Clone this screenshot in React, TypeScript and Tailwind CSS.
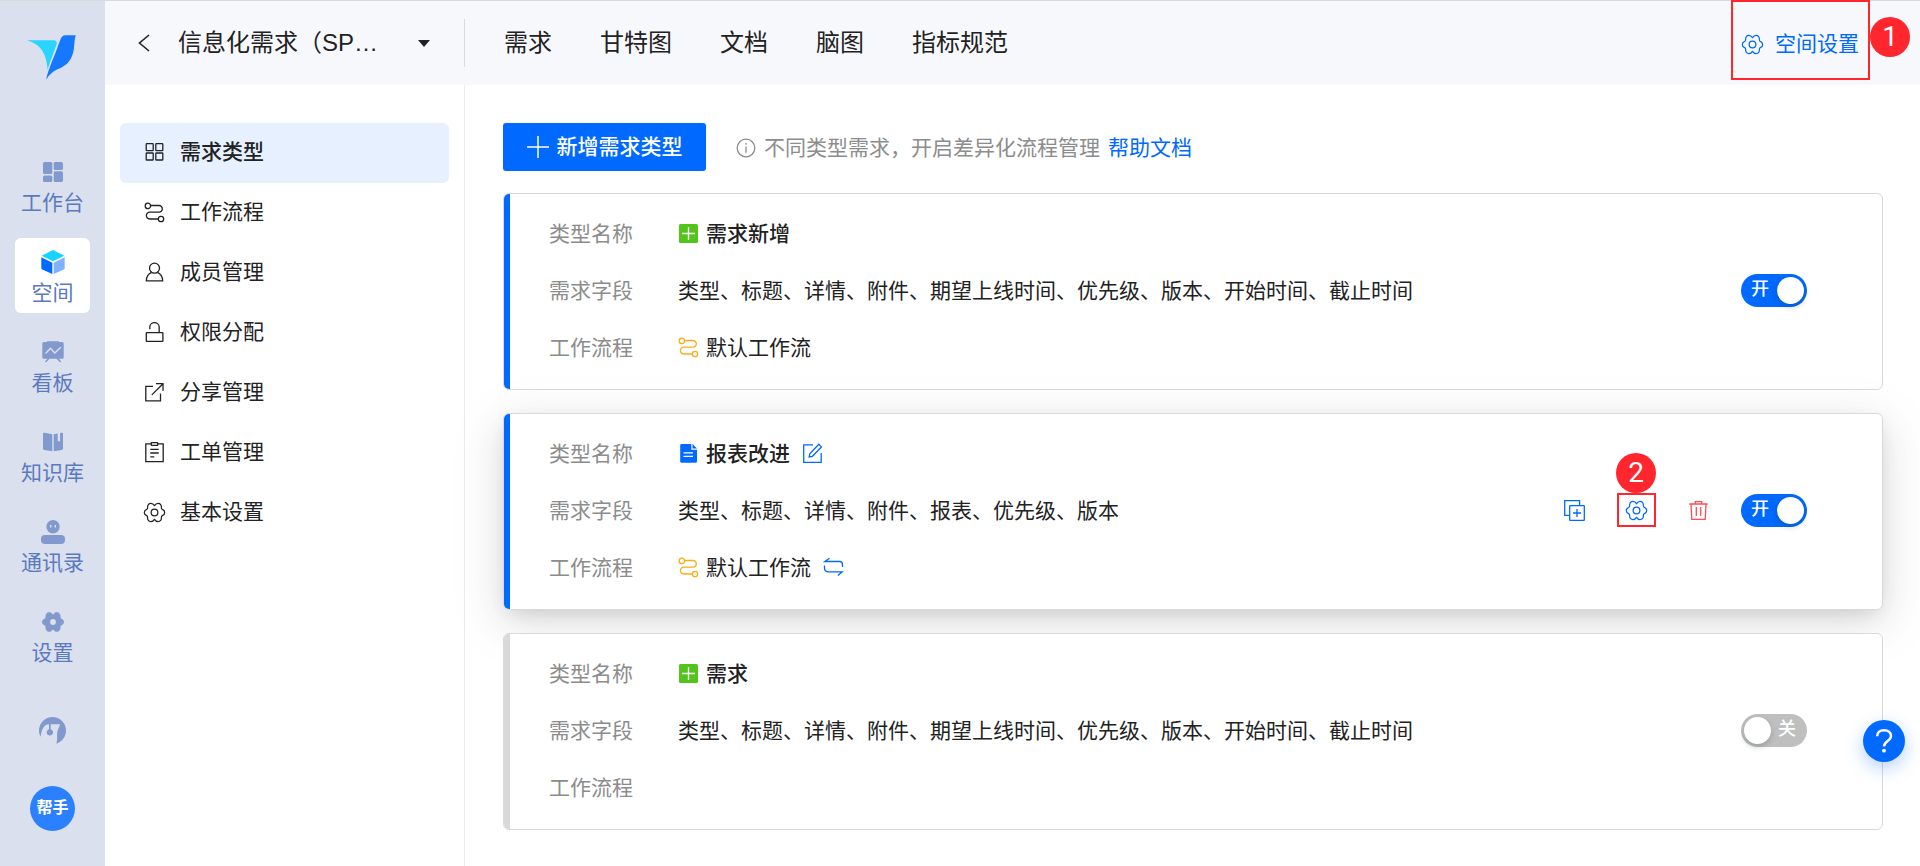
import { ReactNode, useState } from 'react';

type IconProps = { className?: string };

const GEAR_OUTLINE =
  'M12 4.9C11 3.4 9.8 2.4 8.3 2.4C5.9 2.4 4.6 4.2 4.8 7.2C4.8 8.2 4.3 8.6 3.4 9C.7 10.2.7 13.8 3.4 15C4.3 15.4 4.8 15.8 4.8 16.8C4.6 19.8 5.9 21.6 8.3 21.6C9.8 21.6 11 20.6 12 19.1C13 20.6 14.2 21.6 15.7 21.6C18.1 21.6 19.4 19.8 19.2 16.8C19.2 15.8 19.7 15.4 20.6 15C23.3 13.8 23.3 10.2 20.6 9C19.7 8.6 19.2 8.2 19.2 7.2C19.4 4.2 18.1 2.4 15.7 2.4C14.2 2.4 13 3.4 12 4.9Z';

function LineIcon({ className = 'size-[21px]', children }: IconProps & { children: ReactNode }) {
  return (
    <svg
      viewBox="0 0 21 21"
      fill="none"
      stroke="currentColor"
      strokeWidth="1.3"
      className={`shrink-0 ${className}`}
      aria-hidden="true"
    >
      {children}
    </svg>
  );
}

function GridIcon() {
  return (
    <LineIcon>
      <rect x="2.2" y="1.7" width="7" height="7" rx="0.6" />
      <rect x="11.8" y="1.7" width="7" height="7" rx="0.6" />
      <rect x="2.2" y="11" width="7" height="7" rx="0.6" />
      <rect x="11.8" y="11" width="7" height="7" rx="0.6" />
    </LineIcon>
  );
}

function FlowIcon({ className }: IconProps) {
  return (
    <LineIcon className={className}>
      <circle cx="3.9" cy="3.9" r="2.7" />
      <circle cx="17" cy="17" r="2.7" />
      <path d="M6.6 3.5H15a3.3 3.3 0 0 1 3.3 3.4a3.3 3.3 0 0 1-3.3 3.3H5.8a3.3 3.3 0 0 0-3.4 3.4a3.3 3.3 0 0 0 3.4 3.4h8.5" />
    </LineIcon>
  );
}

function UserIcon() {
  return (
    <LineIcon>
      <circle cx="10.5" cy="6.2" r="5" />
      <path d="M7.6 10.4C4.3 11.8 2.4 14.7 2.3 18.9h16.4c-.1-4.2-2-7.1-5.3-8.5" />
    </LineIcon>
  );
}

function LockIcon() {
  return (
    <LineIcon>
      <rect x="2.3" y="10.6" width="16.6" height="8.8" rx="0.5" />
      <path d="M5.8 7.3V5.3a4.7 4.7 0 0 1 9.4 0v5.3" />
    </LineIcon>
  );
}

function ShareIcon() {
  return (
    <LineIcon>
      <path d="M9 4.3H1.8v14.6h14.7v-7.4M12 1.7h7v7M19 1.7L7.8 12.9" />
    </LineIcon>
  );
}

function ClipboardIcon() {
  return (
    <LineIcon>
      <path d="M7.3 1.9H1.8v17.8h17.4V1.9h-5.5" />
      <rect x="7.3" y="0.7" width="6.4" height="2.7" rx="0.4" />
      <path d="M6.3 7.3h8.4M6.3 11h8.4M6.3 14.8h4" />
    </LineIcon>
  );
}

function GearIcon({ className = '' }: IconProps) {
  return (
    <svg
      viewBox="0 0 24 24"
      fill="none"
      stroke="currentColor"
      strokeWidth="1.3"
      strokeLinejoin="round"
      className={`size-[23px] shrink-0 ${className}`}
      aria-hidden="true"
    >
      <path d={GEAR_OUTLINE} />
      <circle cx="12" cy="12" r="3.5" />
    </svg>
  );
}

function EditIcon() {
  return (
    <LineIcon>
      <path d="M11 1.8H1.7v17.5h17.5V10" />
      <path d="M16.8 1.3l2.6 2.6-9 9.4-3.3.7.7-3.3z" />
    </LineIcon>
  );
}

function SwapIcon() {
  return (
    <LineIcon>
      <path d="M6.5 1.3L2 4.5h14.5a3 3 0 0 1 3 3V10M14.8 18.5l4.5-3.7H4.8a3.3 3.3 0 0 1-3.3-3.3v-3" />
    </LineIcon>
  );
}

function CopyIcon() {
  return (
    <LineIcon>
      <path d="M5.7 15.3H.7V.7h14.9v5" />
      <rect x="5.7" y="5.7" width="14.6" height="14.6" rx="0.4" />
      <path d="M13 9v8M9 13h8" />
    </LineIcon>
  );
}

function TrashIcon() {
  return (
    <LineIcon>
      <path d="M1.3 4h18.4M7.3 4V1.7h6.4V4M3 4l.8 15.3h13.4L18 4M8.3 7v9M12.7 7v9" />
    </LineIcon>
  );
}

function PlusBox() {
  return (
    <svg viewBox="0 0 21 21" className="size-[21px] shrink-0" aria-hidden="true">
      <rect x="1" y="1" width="19" height="19" rx="1.5" fill="#52c41a" />
      <path d="M10.5 4v13M4 10.5h13" stroke="#fff" strokeWidth="1.3" />
    </svg>
  );
}

function DocIcon() {
  return (
    <svg viewBox="0 0 21 21" className="size-[21px] shrink-0" aria-hidden="true">
      <path
        d="M3.5 1h9.8v5.7H19v11.8a1.3 1.3 0 0 1-1.3 1.3H3.5a1.3 1.3 0 0 1-1.3-1.3V2.3A1.3 1.3 0 0 1 3.5 1z"
        fill="#0069ff"
      />
      <path d="M14.5 1L19 5.5h-4.5z" fill="#0069ff" />
      <path d="M5.5 9.9H15M5.5 13.3H15" stroke="#fff" strokeWidth="1.3" />
    </svg>
  );
}

function Logo() {
  return (
    <svg viewBox="0 0 51 45" className="h-[45px] w-[51px]" aria-hidden="true">
      <path d="M0 5.3H26C29 5.3 30.3 6.5 29.5 9.5L20.5 34.5C20 22 15.5 9.5 0 5.3Z" fill="#2ad4ff" />
      <path
        d="M38.5.3H48.7C46.5 8 48 14.5 45 21C42 28.5 36.5 32 30 34.5C25.5 36.5 22.5 39.5 19.3 44.5C20 37.5 26.5 24 33 5.5C34.2 2 35.8.3 38.5.3Z"
        fill="#1677ff"
      />
    </svg>
  );
}

function RailSvg({ children }: { children: ReactNode }) {
  return (
    <svg viewBox="0 0 24 24" className="size-[24px]" fill="#8299cd" aria-hidden="true">
      {children}
    </svg>
  );
}

const railItems: { label: string; icon: ReactNode }[] = [
  {
    label: '工作台',
    icon: (
      <RailSvg>
        <rect x="2" y="2" width="9.3" height="12" rx="1.5" />
        <rect x="12.7" y="2" width="9.3" height="8" rx="1.5" />
        <rect x="2" y="15.5" width="9.3" height="6.5" rx="1.5" />
        <rect x="12.7" y="11.3" width="9.3" height="10.7" rx="1.5" />
      </RailSvg>
    ),
  },
  {
    label: '空间',
    icon: (
      <RailSvg>
        <path d="M12 0L23.3 5.7 12 11.3.7 5.7z" fill="#16d3ff" />
        <path d="M.3 7.3L11.3 12.7V24l-10-4.5a1.5 1.5 0 0 1-1-1.4z" fill="#0069ff" />
        <path d="M23.7 7.3L12.7 12.7V24l10-4.5a1.5 1.5 0 0 0 1-1.4z" fill="#80b1ff" />
      </RailSvg>
    ),
  },
  {
    label: '看板',
    icon: (
      <RailSvg>
        <path d="M6 2V1.3h12V2h3.2a1.5 1.5 0 0 1 1.5 1.5v13.7a1.5 1.5 0 0 1-1.5 1.5h-3.4l2.4 2.7-1 1-3.7-3.7h-7L5 22.4l-1-1 2.4-2.7H2.8a1.5 1.5 0 0 1-1.5-1.5V3.5A1.5 1.5 0 0 1 2.8 2z" />
        <path d="M4.5 13.5l5-5.3 4.3 4.8 6-5.7" fill="none" stroke="#dae0ee" strokeWidth="1.4" />
      </RailSvg>
    ),
  },
  {
    label: '知识库',
    icon: (
      <RailSvg>
        <path d="M2 4a1.3 1.3 0 0 1 1.6-1.3l7.7 1.6v17L3.3 20A1.5 1.5 0 0 1 2 18.5z" />
        <path d="M12.7 4.3l4-.8v7.7h2.4V3l1.3-.3A1.3 1.3 0 0 1 22 4v14.5a1.5 1.5 0 0 1-1.3 1.5l-8 1.3z" />
      </RailSvg>
    ),
  },
  {
    label: '通讯录',
    icon: (
      <RailSvg>
        <circle cx="12" cy="6.7" r="6.7" />
        <rect x="0" y="15" width="24" height="9" rx="4" />
        <path d="M9.7 5v2.5M14.3 5v2.5" stroke="#dae0ee" strokeWidth="1.4" />
      </RailSvg>
    ),
  },
  {
    label: '设置',
    icon: (
      <RailSvg>
        <path d={GEAR_OUTLINE} stroke="#8299cd" strokeWidth="0.6" strokeLinejoin="round" />
        <circle cx="12" cy="12" r="2.9" fill="#dae0ee" />
      </RailSvg>
    ),
  },
];

const topTabs = ['需求', '甘特图', '文档', '脑图', '指标规范'];

const menuItems: { label: string; icon: ReactNode }[] = [
  { label: '需求类型', icon: <GridIcon /> },
  { label: '工作流程', icon: <FlowIcon /> },
  { label: '成员管理', icon: <UserIcon /> },
  { label: '权限分配', icon: <LockIcon /> },
  { label: '分享管理', icon: <ShareIcon /> },
  { label: '工单管理', icon: <ClipboardIcon /> },
  { label: '基本设置', icon: <GearIcon className="-mx-px" /> },
];

interface RequirementType {
  name: string;
  icon: 'plus' | 'doc';
  fields: string;
  workflow?: string;
  enabled: boolean;
  hovered?: boolean;
}

const requirementTypes: RequirementType[] = [
  {
    name: '需求新增',
    icon: 'plus',
    fields: '类型、标题、详情、附件、期望上线时间、优先级、版本、开始时间、截止时间',
    workflow: '默认工作流',
    enabled: true,
  },
  {
    name: '报表改进',
    icon: 'doc',
    fields: '类型、标题、详情、附件、报表、优先级、版本',
    workflow: '默认工作流',
    enabled: true,
    hovered: true,
  },
  {
    name: '需求',
    icon: 'plus',
    fields: '类型、标题、详情、附件、期望上线时间、优先级、版本、开始时间、截止时间',
    enabled: false,
  },
];

function StepBadge({ step, className }: { step: number; className: string }) {
  return (
    <span
      className={`absolute flex size-10 items-center justify-center rounded-full bg-[#ff272d] font-[Roboto,sans-serif] text-[28px] leading-none text-white ${className}`}
    >
      {step}
    </span>
  );
}

function Toggle({ on, label, onChange }: { on: boolean; label: string; onChange: () => void }) {
  return (
    <button
      type="button"
      role="switch"
      aria-checked={on}
      aria-label={label}
      onClick={onChange}
      className={`flex h-[33px] w-[66px] items-center justify-between rounded-full text-lg leading-none font-medium text-white ${
        on ? 'bg-[#0069ff] pr-[3px] pl-2.5' : 'flex-row-reverse bg-[#bfbfbf] pr-[11px] pl-[3px]'
      }`}
    >
      <span className="pb-0.5">{on ? '开' : '关'}</span>
      <span className="size-[27px] rounded-full bg-white shadow-[0_3px_6px_rgba(0,35,11,0.2)]" />
    </button>
  );
}

function Row({ label, children }: { label: string; children?: ReactNode }) {
  return (
    <div className="flex h-[57px] items-center">
      <dt className="w-[129px] shrink-0 text-[#8c8c8c]">{label}</dt>
      <dd className="flex items-center">{children}</dd>
    </div>
  );
}

function TypeCard({ item }: { item: RequirementType }) {
  const [on, setOn] = useState(item.enabled);

  return (
    <li
      className={`flex rounded-md border border-[#d9d9d9] bg-white ${
        item.hovered
          ? 'shadow-[0_6px_18px_-6px_rgba(0,0,0,0.14),0_12px_42px_rgba(0,0,0,0.1),0_12px_60px_16px_rgba(0,0,0,0.03)]'
          : ''
      }`}
    >
      <span className={`w-1.5 shrink-0 rounded-l-[5px] ${on ? 'bg-[#0069ff]' : 'bg-[#d9d9d9]'}`} />
      <dl className="min-w-0 flex-1 pt-[11px] pb-[13px] pl-[39px]">
        <Row label="类型名称">
          {item.icon === 'plus' ? <PlusBox /> : <DocIcon />}
          <span className="ml-[7px] font-medium">{item.name}</span>
          {item.hovered && (
            <button type="button" aria-label="编辑名称" className="ml-3 text-[#0069ff]">
              <EditIcon />
            </button>
          )}
        </Row>
        <Row label="需求字段">{item.fields}</Row>
        <Row label="工作流程">
          {item.workflow && (
            <>
              <FlowIcon className="size-[21px] text-[#faad14]" />
              <span className="ml-[7px]">{item.workflow}</span>
            </>
          )}
          {item.hovered && (
            <button type="button" aria-label="切换工作流" className="ml-3 text-[#0069ff]">
              <SwapIcon />
            </button>
          )}
        </Row>
      </dl>
      <div className="flex items-center gap-8 pr-[75px] pb-[3px]">
        {item.hovered && (
          <>
            <button type="button" aria-label="复制" className="text-[#0069ff]">
              <CopyIcon />
            </button>
            <div className="relative">
              <button
                type="button"
                aria-label="设置"
                className="flex h-[34px] w-[39px] items-center justify-center border-2 border-[#ff272d] text-[#0069ff]"
              >
                <GearIcon />
              </button>
              <StepBadge step={2} className="bottom-full -left-px" />
            </div>
            <button type="button" aria-label="删除" className="text-[#ff4d4f]">
              <TrashIcon />
            </button>
          </>
        )}
        <Toggle on={on} label={item.name} onChange={() => setOn(!on)} />
      </div>
    </li>
  );
}

function Rail() {
  return (
    <aside className="flex w-[105px] shrink-0 flex-col items-center bg-[#dae0ee] pt-[34px] pb-6">
      <Logo />
      <nav className="mt-[68px] flex flex-col gap-[15px]">
        {railItems.map((item) => (
          <a
            key={item.label}
            href="#"
            className={`flex size-[75px] flex-col items-center gap-[3px] rounded-md pt-3 leading-[32px] text-[#5a7abf] ${
              item.label === '空间' ? 'bg-white' : ''
            }`}
          >
            {item.icon}
            <span className="whitespace-nowrap">{item.label}</span>
          </a>
        ))}
      </nav>
      <button type="button" aria-label="客服" className="mt-11">
        <svg viewBox="0 0 27 27" className="size-[27px]" fill="#8299cd" aria-hidden="true">
          <path d="M1.6 19.8C.5 17.8 0 15.7 0 13.5A13.5 13.5 0 0 1 27 13.5C27 19.5 23.5 24.5 17.3 26.8C18.5 23.5 18 20.5 18.1 16.5C18.3 13 20.3 10.5 21 7.2H11.7V12.2A3.2 3.2 0 1 1 10 12.2V7.2C4.5 7.5 2.6 12.5 1.6 19.8Z" />
        </svg>
      </button>
      <button
        type="button"
        className="mt-[42px] flex size-[45px] items-center justify-center rounded-full bg-[#2b80ff] pb-0.5 text-base leading-none font-bold text-white"
      >
        帮手
      </button>
    </aside>
  );
}

function Header() {
  return (
    <header className="flex h-[84px] items-center bg-[#f7f8fc] text-2xl">
      <div className="flex h-12 w-[360px] shrink-0 items-center border-r border-[#d9dbe1] pl-[33px]">
        <button type="button" aria-label="返回">
          <svg viewBox="0 0 12 18" className="h-[18px] w-3" fill="none" stroke="#222" strokeWidth="1.6" aria-hidden="true">
            <path d="M11 1L1.5 9l9.5 8" />
          </svg>
        </button>
        <button type="button" className="ml-7 flex flex-1 items-center justify-between pr-[34px]">
          <span>信息化需求（SP…</span>
          <svg viewBox="0 0 12 7" className="h-[7px] w-3" fill="#222" aria-hidden="true">
            <path d="M0 0h12L6 7z" />
          </svg>
        </button>
      </div>
      <nav className="flex flex-1 gap-12 pl-[39px]">
        {topTabs.map((tab) => (
          <a key={tab} href="#" className="whitespace-nowrap">
            {tab}
          </a>
        ))}
      </nav>
      <div className="relative -mt-px mr-[50px] self-start">
        <a
          href="#"
          className="flex h-20 w-[139px] items-center gap-[11px] border-2 border-[#ff272d] pt-2 pl-2 text-[21px] whitespace-nowrap text-[#0069ff]"
        >
          <GearIcon />
          空间设置
        </a>
        <StepBadge step={1} className="top-[17px] left-full" />
      </div>
    </header>
  );
}

export default function App() {
  return (
    <div className="flex min-h-screen border-t border-[#d8dadf] bg-white font-['Liberation_Sans','Noto_Sans_CJK_SC',sans-serif] text-[21px] leading-[32px] text-[#222]">
      <Rail />
      <div className="flex min-w-0 flex-1 flex-col">
        <Header />
        <div className="flex flex-1">
          <nav className="w-[360px] shrink-0 border-r border-[#ebebeb] px-[15px] pt-[38px]">
            {menuItems.map((item, i) => (
              <a
                key={item.label}
                href="#"
                className={`flex h-[60px] items-center gap-[15px] rounded-md pb-0.5 pl-6 ${i === 0 ? 'bg-[#e6f0ff] font-medium' : ''}`}
              >
                {item.icon}
                {item.label}
              </a>
            ))}
          </nav>
          <main className="min-w-0 flex-1 pt-[38px] pr-[37px] pb-6 pl-[38px]">
            <div className="flex items-center">
              <button
                type="button"
                className="flex h-12 w-[203px] items-center justify-center gap-2 rounded-[3px] bg-[#0069ff] font-medium text-white"
              >
                <svg viewBox="0 0 22 22" className="size-[22px]" stroke="#fff" strokeWidth="1.5" aria-hidden="true">
                  <path d="M11 0v22M0 11h22" />
                </svg>
                新增需求类型
              </button>
              <p className="ml-[30px] flex items-center pt-0.5 text-[#8c8c8c]">
                <svg viewBox="0 0 20 20" className="mr-2 size-5" fill="none" stroke="currentColor" strokeWidth="1.3" aria-hidden="true">
                  <circle cx="10" cy="10" r="8.8" />
                  <path d="M10 8.5v6.3M10 5v1.7" />
                </svg>
                不同类型需求，开启差异化流程管理
                <a href="#" className="ml-2 text-[#0069ff]">
                  帮助文档
                </a>
              </p>
            </div>
            <ul className="mt-[22px] flex flex-col gap-[23px]">
              {requirementTypes.map((item) => (
                <TypeCard key={item.name} item={item} />
              ))}
            </ul>
          </main>
        </div>
      </div>
      <button
        type="button"
        aria-label="帮助"
        className="fixed right-[15px] bottom-[104px] flex size-[42px] items-center justify-center rounded-full bg-[#0069ff] shadow-[0_6px_18px_rgba(0,105,255,0.3)]"
      >
        <svg viewBox="0 0 18 26" className="h-[26px] w-[18px]" fill="none" aria-hidden="true">
          <path d="M2.2 8.2C2.2 4.5 5 2.2 9 2.2s7 2.3 7 5.8c0 5-7 5-7 10.5" stroke="#fff" strokeWidth="2.5" />
          <circle cx="9" cy="22.7" r="1.9" fill="#fff" />
        </svg>
      </button>
    </div>
  );
}
